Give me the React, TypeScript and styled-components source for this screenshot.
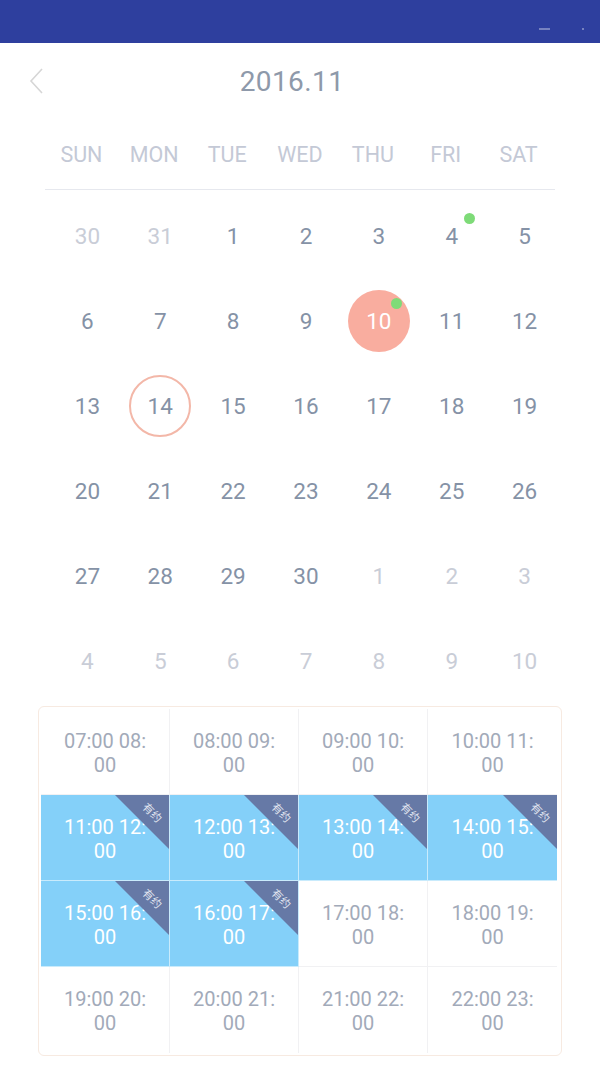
import styled, { createGlobalStyle } from "styled-components";

const GlobalStyle = createGlobalStyle`
  html, body {
    margin: 0;
    padding: 0;
    background: #ffffff;
    font-family: Roboto, "Noto Sans", "Noto Sans CJK SC", sans-serif;
  }
`;

const Page = styled.div`
  width: 600px;
  height: 1067px;
  background: #fff;
  overflow: hidden;
`;

const StatusBar = styled.div`
  height: 43px;
  background: #2e3f9e;
  display: flex;
  align-items: center;
  justify-content: flex-end;
  gap: 32px;
  padding-right: 16px;
  box-sizing: border-box;
`;

const StatusMark = styled.span<{ $w: number }>`
  display: block;
  width: ${(p) => p.$w}px;
  height: 2px;
  margin-top: 14px;
  background: rgba(255, 255, 255, 0.35);
`;

const Header = styled.header`
  height: 74px;
  padding-top: 2px;
  padding-right: 16px;
  box-sizing: border-box;
  display: flex;
  align-items: center;
  justify-content: center;
  position: relative;
`;

const BackButton = styled.button`
  position: absolute;
  left: 26px;
  top: 23px;
  width: 24px;
  height: 30px;
  padding: 0;
  border: none;
  background: transparent;
`;

const Title = styled.h1`
  margin: 0;
  font-size: 28px;
  font-weight: 400;
  color: #8e99aa;
  letter-spacing: 0.4px;
`;

const WeekRow = styled.div`
  margin: 0 45px;
  height: 73px;
  padding-top: 26px;
  box-sizing: border-box;
  border-bottom: 1px solid #e6e8ee;
  display: grid;
  grid-template-columns: repeat(7, 1fr);
`;

const WeekDay = styled.div`
  text-align: center;
  font-size: 21.5px;
  line-height: 24px;
  color: #c4c9d6;
`;

const DateGrid = styled.div`
  margin: 0 39px 0 51px;
  padding-top: 3px;
  display: grid;
  grid-template-columns: repeat(7, 1fr);
  grid-auto-rows: 85px;
`;

const DateCell = styled.div`
  display: flex;
  align-items: center;
  justify-content: center;
  position: relative;
`;

const DateNum = styled.span<{ $muted?: boolean; $selected?: boolean; $today?: boolean }>`
  width: 62px;
  height: 62px;
  box-sizing: border-box;
  border-radius: 50%;
  display: flex;
  align-items: center;
  justify-content: center;
  font-size: 22.5px;
  color: ${(p) => (p.$selected ? "#ffffff" : p.$muted ? "#c9cdd7" : "#8592a6")};
  background: ${(p) => (p.$selected ? "#f9ad9f" : "transparent")};
  border: ${(p) => (p.$today ? "2px solid #f3b7a8" : "none")};
`;

const Dot = styled.span`
  position: absolute;
  left: 50%;
  top: 50%;
  width: 11px;
  height: 11px;
  margin-left: 12px;
  margin-top: -23px;
  border-radius: 50%;
  background: #7edb78;
`;

const TimeTable = styled.div`
  margin: 3px 38px 0;
  border: 1px solid #f7eae1;
  border-radius: 6px;
  padding: 2px 4px 2px 2px;
  display: grid;
  grid-template-columns: repeat(4, 1fr);
  grid-auto-rows: 86px;
`;

const Slot = styled.div<{ $booked?: boolean }>`
  position: relative;
  overflow: hidden;
  display: flex;
  flex-direction: column;
  align-items: center;
  justify-content: center;
  padding-top: 2px;
  box-sizing: border-box;
  font-size: 20px;
  line-height: 24px;
  color: ${(p) => (p.$booked ? "#ffffff" : "#a2aab9")};
  background: ${(p) => (p.$booked ? "#84d0f9" : "#ffffff")};
  border-right: 1px solid ${(p) => (p.$booked ? "#c9ebfc" : "#f1f1f3")};
  border-bottom: 1px solid ${(p) => (p.$booked ? "#c9ebfc" : "#f1f1f3")};
  &:nth-child(4n) {
    border-right: none;
  }
  &:nth-last-child(-n + 4) {
    border-bottom: none;
  }
`;

const Ribbon = styled.span`
  position: absolute;
  top: 0;
  right: 0;
  width: 54px;
  height: 54px;
  background: #6679a6;
  clip-path: polygon(0 0, 100% 0, 100% 100%);
`;

const RibbonText = styled.span`
  position: absolute;
  top: 11px;
  right: 5px;
  font-size: 11px;
  line-height: 12px;
  color: #e4e8f2;
  transform: rotate(45deg);
  font-family: "Noto Sans CJK SC", sans-serif;
`;

const weekDays = ["SUN", "MON", "TUE", "WED", "THU", "FRI", "SAT"];

type Day = { n: number; muted?: boolean; dot?: boolean };

const days: Day[] = [
  { n: 30, muted: true },
  { n: 31, muted: true },
  ...Array.from({ length: 30 }, (_, i) => ({ n: i + 1, dot: i + 1 === 4 || i + 1 === 10 })),
  ...Array.from({ length: 10 }, (_, i) => ({ n: i + 1, muted: true })),
];

const bookedHours = [11, 12, 13, 14, 15, 16];

const pad = (h: number) => `${h < 10 ? "0" : ""}${h}:00`;

function App() {
  return (
    <Page>
      <GlobalStyle />
      <StatusBar>
        <StatusMark $w={11} />
        <StatusMark $w={2} />
      </StatusBar>
      <Header>
        <BackButton aria-label="back">
          <svg width="24" height="30" viewBox="0 0 24 30">
            <polyline points="16,3 5,15 16,27" fill="none" stroke="#d6d6d6" strokeWidth="1.6" />
          </svg>
        </BackButton>
        <Title>2016.11</Title>
      </Header>
      <WeekRow>
        {weekDays.map((d) => (
          <WeekDay key={d}>{d}</WeekDay>
        ))}
      </WeekRow>
      <DateGrid>
        {days.map((d, i) => {
          const current = !d.muted;
          return (
            <DateCell key={i}>
              <DateNum $muted={d.muted} $selected={current && d.n === 10} $today={current && d.n === 14}>
                {d.n}
              </DateNum>
              {d.dot && <Dot />}
            </DateCell>
          );
        })}
      </DateGrid>
      <TimeTable>
        {Array.from({ length: 16 }, (_, i) => {
          const start = 7 + i;
          const end = pad(start + 1);
          const booked = bookedHours.includes(start);
          return (
            <Slot key={start} $booked={booked}>
              <span>
                {pad(start)} {end.slice(0, 3)}
              </span>
              <span>{end.slice(3)}</span>
              {booked && (
                <>
                  <Ribbon />
                  <RibbonText>有约</RibbonText>
                </>
              )}
            </Slot>
          );
        })}
      </TimeTable>
    </Page>
  );
}

export default App;
